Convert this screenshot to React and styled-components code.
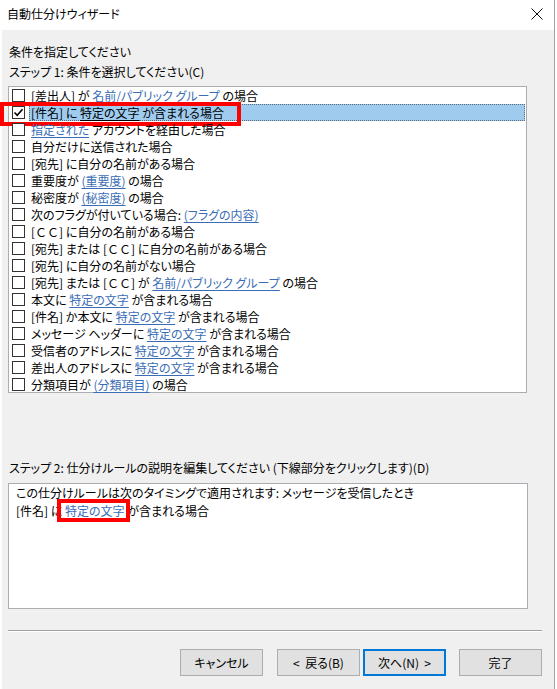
import React from "react";
import styled, { createGlobalStyle, css } from "styled-components";

const GlobalStyle = createGlobalStyle`
  html, body {
    margin: 0;
    background: #ffffff;
  }
  body {
    font-family: "Noto Sans CJK JP", "Noto Sans", sans-serif;
    font-size: 12px;
    font-feature-settings: "palt";
    color: #000;
  }
`;

const CC = { wide: "ＣＣ" };

const conditions = [
  { parts: ["[差出人] が ", { link: "名前/パブリック グループ" }, " の場合"] },
  { parts: ["[件名] に ", { link: "特定の文字" }, " が含まれる場合"], checked: true, selected: true },
  { parts: [{ link: "指定された" }, " アカウントを経由した場合"] },
  { parts: ["自分だけに送信された場合"] },
  { parts: ["[宛先] に自分の名前がある場合"] },
  { parts: ["重要度が ", { link: "(重要度)" }, " の場合"] },
  { parts: ["秘密度が ", { link: "(秘密度)" }, " の場合"] },
  { parts: ["次のフラグが付いている場合: ", { link: "(フラグの内容)" }] },
  { parts: ["[", CC, "] に自分の名前がある場合"] },
  { parts: ["[宛先] または [", CC, "] に自分の名前がある場合"] },
  { parts: ["[宛先] に自分の名前がない場合"] },
  { parts: ["[宛先] または [", CC, "] が ", { link: "名前/パブリック グループ" }, " の場合"] },
  { parts: ["本文に ", { link: "特定の文字" }, " が含まれる場合"] },
  { parts: ["[件名] か本文に ", { link: "特定の文字" }, " が含まれる場合"] },
  { parts: ["メッセージ ヘッダーに ", { link: "特定の文字" }, " が含まれる場合"] },
  { parts: ["受信者のアドレスに ", { link: "特定の文字" }, " が含まれる場合"] },
  { parts: ["差出人のアドレスに ", { link: "特定の文字" }, " が含まれる場合"] },
  { parts: ["分類項目が ", { link: "(分類項目)" }, " の場合"] },
];

const Window = styled.div`
  width: 554px;
  height: 689px;
  border-right: 1px solid #a3a3a3;
  display: flex;
  flex-direction: column;
  background: #fff;
`;

const TitleBar = styled.div`
  height: 30px;
  flex-shrink: 0;
  display: flex;
  align-items: center;
  justify-content: space-between;
  padding: 0 11px 0 7px;
  background: #fff;
`;

const Title = styled.span`
  font-size: 12px;
  line-height: 16px;
  margin-top: -2px;
`;

const CloseButton = styled.div`
  width: 12px;
  height: 12px;
  margin-top: -3px;
  display: flex;
`;

const Body = styled.div`
  flex: 1;
  margin-left: 2px;
  background: #f0f0f0;
  padding: 12px 12px 0 6px;
  display: flex;
  flex-direction: column;
`;

const Heading = styled.div`
  padding-left: 1px;
  line-height: 20px;
  white-space: nowrap;
`;

const ListBox = styled.div`
  margin-top: 4px;
  width: 519px;
  height: 307px;
  box-sizing: border-box;
  border: 1px solid #abadb3;
  background: #fff;
`;

const Row = styled.div`
  position: relative;
  height: 17px;
  display: flex;
  align-items: center;
  padding-left: 3px;
`;

const CheckBox = styled.span`
  width: 13px;
  height: 13px;
  box-sizing: border-box;
  border: 1px solid #333;
  background: #fff;
  flex-shrink: 0;
  margin-right: 4px;
  display: flex;
  align-items: center;
  justify-content: center;
`;

const Label = styled.span`
  flex: 1;
  height: 17px;
  box-sizing: border-box;
  margin-right: 1px;
  padding-left: 1px;
  border: 1px dotted transparent;
  line-height: 15px;
  white-space: nowrap;
  ${(p) =>
    p.$selected &&
    css`
      background: #9fcbef;
      border-color: #5a6a78;
    `}
`;

const Wide = styled.span`
  font-feature-settings: normal;
`;

const Link = styled.span`
  position: relative;
  text-decoration: underline;
  text-underline-offset: 2px;
  color: ${(p) => (p.$plain ? "#000" : "#3a6db5")};
  ${(p) =>
    p.$marked &&
    css`
      &::after {
        content: "";
        position: absolute;
        top: -3px;
        bottom: -3px;
        left: -8px;
        right: -5px;
        border: 4px solid #ff0000;
      }
    `}
`;

const RowMark = styled.span`
  position: absolute;
  left: -9px;
  top: -2px;
  width: 241px;
  height: 24px;
  box-sizing: border-box;
  border: 4px solid #ff0000;
  pointer-events: none;
`;

const StepTwo = styled(Heading)`
  margin-top: 65px;
`;

const DescBox = styled.div`
  margin-top: 5px;
  width: 520px;
  height: 126px;
  box-sizing: border-box;
  border: 1px solid #abadb3;
  background: #fff;
  padding: 0 0 0 7px;
`;

const DescLine = styled.div`
  line-height: 18px;
  white-space: nowrap;
`;

const Separator = styled.div`
  margin-top: 21px;
  width: 534px;
  height: 1px;
  background: #a0a0a0;
  border-bottom: 1px solid #ffffff;
`;

const ButtonRow = styled.div`
  margin-top: 17px;
  display: flex;
  justify-content: flex-end;
`;

const Button = styled.div`
  width: 83px;
  height: 27px;
  box-sizing: border-box;
  margin-left: ${(p) => p.$gap}px;
  border: 1px solid #adadad;
  background: #e1e1e1;
  display: flex;
  align-items: center;
  justify-content: center;
  white-space: pre;
  ${(p) =>
    p.$default &&
    css`
      border-color: #0078d7;
      box-shadow: inset 0 0 0 1px #0078d7;
    `}
`;

function Segments({ parts, plain, markLink }) {
  return parts.map((part, i) => {
    if (typeof part === "string") return <React.Fragment key={i}>{part}</React.Fragment>;
    if (part.wide) return <Wide key={i}>{part.wide}</Wide>;
    return (
      <Link key={i} $plain={plain} $marked={markLink}>
        {part.link}
      </Link>
    );
  });
}

export default function App() {
  return (
    <>
      <GlobalStyle />
      <Window>
        <TitleBar>
          <Title>自動仕分けウィザード</Title>
          <CloseButton>
            <svg width="12" height="12" viewBox="0 0 12 12">
              <path d="M0.5 0.5L11.5 11.5M11.5 0.5L0.5 11.5" stroke="#111" strokeWidth="1" />
            </svg>
          </CloseButton>
        </TitleBar>
        <Body>
          <Heading>条件を指定してください</Heading>
          <Heading>ステップ 1: 条件を選択してください(C)</Heading>
          <ListBox>
            {conditions.map((c, i) => (
              <Row key={i}>
                <CheckBox>
                  {c.checked && (
                    <svg width="11" height="11" viewBox="0 0 11 11">
                      <path d="M1.5 5.5L4.2 8.3L9.5 2.2" fill="none" stroke="#000" strokeWidth="1.6" />
                    </svg>
                  )}
                </CheckBox>
                <Label $selected={c.selected}>
                  <Segments parts={c.parts} plain={c.selected} />
                </Label>
                {c.selected && <RowMark />}
              </Row>
            ))}
          </ListBox>
          <StepTwo>ステップ 2: 仕分けルールの説明を編集してください (下線部分をクリックします)(D)</StepTwo>
          <DescBox>
            <DescLine>この仕分けルールは次のタイミングで適用されます: メッセージを受信したとき</DescLine>
            <DescLine>
              <Segments parts={["[件名] に ", { link: "特定の文字" }, " が含まれる場合"]} markLink />
            </DescLine>
          </DescBox>
          <Separator />
          <ButtonRow>
            <Button $gap={0}>キャンセル</Button>
            <Button $gap={14}>{"<  戻る(B)"}</Button>
            <Button $gap={3} $default>{"次へ(N)  >"}</Button>
            <Button $gap={13}>完了</Button>
          </ButtonRow>
        </Body>
      </Window>
    </>
  );
}
